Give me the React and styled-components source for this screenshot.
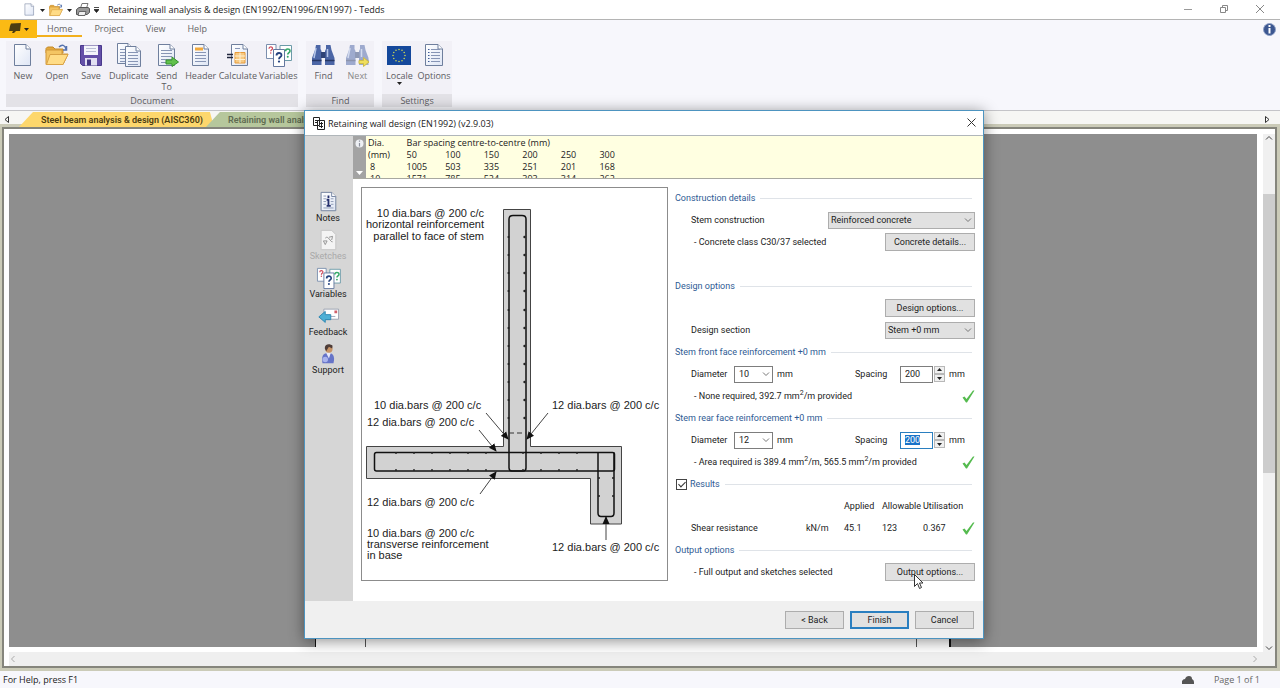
import React, { useEffect, useRef } from 'react'
import styled, { createGlobalStyle } from 'styled-components'

/* ---------- data ---------- */

const menuTabs = ['Home', 'Project', 'View', 'Help']

const spacings = ['50', '100', '150', '200', '250', '300']
const barAreas = [
  { dia: '8', areas: ['1005', '503', '335', '251', '201', '168'] },
  { dia: '10', areas: ['1571', '785', '524', '393', '314', '262'] },
]

/* ---------- icons ---------- */

const PageShape = ({ x = 3, y = 1, w = 17, h = 22, children }) => (
  <g transform={`translate(${x} ${y})`}>
    <path d={`M0.5 0.5H${w - 5}L${w - 0.5} 5V${h - 0.5}H0.5Z`} fill="url(#paper)" stroke="#6f7f9d" />
    <path d={`M${w - 5} 0.5V5H${w - 0.5}`} fill="#fff" stroke="#6f7f9d" />
    {children}
  </g>
)

const Lines = ({ x = 3, y = 6, w = 11, n = 5, color = '#8795b5' }) =>
  Array.from({ length: n }, (_, i) => (
    <path key={i} d={`M${x} ${y + i * 3 + 0.5}h${w}`} stroke={color} />
  ))

const NewIcon = () => <PageShape />

const OpenIcon = () => (
  <g>
    <path d="M1 5.500L2.500 4H8L10 6H18V10H1Z" fill="#e3a83c" stroke="#c48a2a" />
    <path d="M1 21.500V7H17V11H23L18 21.500Z" fill="#f4c563" stroke="#d0983a" />
    <path d="M5 11.500H23L18 21.500H1.500Z" fill="#ffdc86" stroke="#d9a245" />
    <path d="M14 4C17 1 20 2 21 6M21.500 3V7H18" fill="none" stroke="#5572ad" strokeWidth="1.500" />
  </g>
)

const SaveIcon = () => (
  <g>
    <path d="M1.500 2.500H22.500V22.500H3.500L1.500 20.500Z" fill="#6450a8" stroke="#49398c" />
    <path d="M5 2.500H19V12H5Z" fill="#f4f5fb" />
    <path d="M7 5.500H17M7 8.500H17" stroke="#b9bfd4" />
    <path d="M6 15H18V22.500H6Z" fill="#e2e0f2" />
    <path d="M8 16.500H12V22.500H8Z" fill="#443684" />
  </g>
)

const DuplicateIcon = () => (
  <g>
    <PageShape x={0} y={0} w={16} h={21}><Lines w={9} /></PageShape>
    <PageShape x={8} y={3} w={16} h={21}><Lines w={10} /></PageShape>
  </g>
)

const SendIcon = () => (
  <g>
    <PageShape><Lines n={5} /></PageShape>
    <path d="M11 17H17V14L23.500 19L17 23.500V21H11Z" fill="#62c24c" stroke="#36912f" />
  </g>
)

const HeaderIcon = () => (
  <PageShape>
    <path d="M3 3.500H11V6.500H3Z" fill="#f2a93c" />
    <Lines y={8} n={4} />
  </PageShape>
)

const CalculateIcon = () => (
  <g>
    <PageShape x={5}>
      <path d="M4 4.500H9" stroke="#8795b5" />
      <path d="M4 8.500H14V19H4Z" fill="#f7ca83" stroke="#e79b3b" />
      <path d="M4 12H14M4 15.500H14M9 8.500V19" stroke="#fff0d2" />
    </PageShape>
    <path d="M1 11.500H7M1 14.500H7" stroke="#20263c" strokeWidth="1.500" />
  </g>
)

const Question = ({ x, y, size = 1, color }) => (
  <g transform={`translate(${x} ${y}) scale(${size})`}>
    <path d="M0 2.500C0 -0.800 5 -0.800 5 2.200C5 4.200 2.500 4 2.500 6.200" fill="none" stroke={color} strokeWidth="1.800" />
    <circle cx="2.500" cy="8.600" r="1.100" fill={color} />
  </g>
)

const VariablesIcon = () => (
  <g>
    <path d="M0.500 1.500H10V15.500H0.500Z" fill="#fff" stroke="#7b8fae" />
    <path d="M14 2.500H25.500V17.500H14Z" fill="#fff" stroke="#6c9ba8" />
    <path d="M7.500 6.500H18.500V23.500H7.500Z" fill="#fff" stroke="#64789f" />
    <Question x={3} y={4} size={0.7} color="#d04a5a" />
    <Question x={19.500} y={6} size={0.9} color="#35a968" />
    <Question x={10.500} y={10} color="#26437f" />
  </g>
)

const FindIcon = () => (
  <g>
    <path d="M5 2H9.500V6L10.500 8V22H1V15L4 7Z" fill="#4c66a6" />
    <path d="M15 2H19.500L20.500 7L23.500 15V22H14V8L15 6Z" fill="#4c66a6" />
    <path d="M10 9H14.500V15H10Z" fill="#2f4377" />
    <path d="M5 5L3 15M16.500 6V14" stroke="#b6c6e8" strokeWidth="1.500" />
    <path d="M1 17.500H10.500M14 17.500H23.500" stroke="#263763" strokeWidth="1.500" />
  </g>
)

const NextIcon = () => (
  <g>
    <g opacity="0.5"><FindIcon /></g>
    <path d="M14 17.500H18.500V14.500L24 19L18.500 23.500V20.500H14Z" fill="#f0df5d" stroke="#cdbb4a" />
  </g>
)

const LocaleIcon = () => (
  <g>
    <path d="M0 3H24V22H0Z" fill="#14489b" />
    {Array.from({ length: 12 }, (_, i) => {
      const a = (i * Math.PI) / 6
      return <circle key={i} cx={12 + 6 * Math.cos(a)} cy={12.5 + 6 * Math.sin(a)} r="0.800" fill="#c9d255" />
    })}
  </g>
)

const OptionsIcon = () => (
  <PageShape x={3} w={18}>
    <Lines x={6} y={5} w={9} />
    <path d="M3 5.500H4.500M3 8.500H4.500M3 11.500H4.500M3 14.500H4.500M3 17.500H4.500" stroke="#3f5b97" />
  </PageShape>
)

const NotesIcon = () => (
  <PageShape x={4} y={1} w={17} h={21}>
    <path d="M3 4.500H6M3 7.500H6M11 7.500H14M3 10.500H6M11 10.500H14M3 13.500H6M11 13.500H14M3 17.500H14" stroke="#8a97b4" />
    <path d="M8.500 4V6.500M6.500 8.500H8.500V15M6.500 15.200H11" fill="none" stroke="#25306e" strokeWidth="2" />
  </PageShape>
)

const SketchesIcon = () => (
  <g>
    <path d="M4.500 1.500H16L20.500 6V22.500H4.500Z" fill="#f4f4f4" stroke="#c4c4c4" />
    <path d="M7 13H11L9 17ZM13 9L17 8L16 12M9 10C12 6 15 15 17 14" fill="none" stroke="#8f8f8f" />
  </g>
)

const FeedbackIcon = () => (
  <g>
    <path d="M7.500 4.500H23.500V15.500H7.500Z" fill="#fff" stroke="#99a1b0" />
    <path d="M19 6H22V9H19Z" fill="#d0606a" />
    <path d="M15 12.500H20" stroke="#98a3b8" />
    <path d="M2 13L9 7V10.500H15V16H9V19Z" fill="#4eb0d5" stroke="#2b84b0" />
  </g>
)

const SupportIcon = () => (
  <g>
    <path d="M6 22C4 12 9 11 12.500 11C17 11 20 14 18 22Z" fill="#6674c8" />
    <path d="M10 11L13 17L15 11Z" fill="#e8e9f8" />
    <circle cx="13" cy="6.500" r="4" fill="#c99467" />
    <path d="M8.500 6C8 1 14 0 17 3L16.500 6L13 4L10 9Z" fill="#4e3d38" />
    <circle cx="9" cy="18" r="3" fill="#a9b3ee" />
  </g>
)

const Icon = ({ size = 24, children }) => (
  <svg width={size} height={size} viewBox="0 0 24 24" overflow="visible" aria-hidden="true">{children}</svg>
)

const Chevron = ({ rotate = 0, color = '#777', size = 8 }) => (
  <svg width={size} height={size} viewBox="0 0 8 8" aria-hidden="true">
    <path d="M1 2.500L4 5.500L7 2.500" fill="none" stroke={color} transform={`rotate(${rotate} 4 4)`} />
  </svg>
)

const Caret = ({ rotate = 0 }) => (
  <svg width="5" height="4" viewBox="0 0 5 4" aria-hidden="true">
    <path d="M0 1H5L2.500 4Z" fill="#222" transform={`rotate(${rotate} 2.500 2)`} />
  </svg>
)

const Tick = () => (
  <svg width="13" height="13" viewBox="0 0 13 13" role="img" aria-label="Pass">
    <path d="M0.500 7.500L2.500 6.500L4.500 9L11 0.500L12.500 0.500L5 12.500H4Z" fill="#55bb4f" />
  </svg>
)

/* ---------- reinforcement sketch ---------- */

const stemDots = [237, 255, 273, 291, 310, 328, 346, 364, 382, 400, 418]
const baseDots = [396, 414, 432, 450, 468, 486, 523, 541, 559, 577]

const WallSketch = () => (
  <Sketch viewBox="362 188 305 392" role="img" aria-label="Retaining wall reinforcement">
    <defs>
      <marker id="head" viewBox="0 0 8 8" refX="7" refY="4" markerWidth="8" markerHeight="8" markerUnits="userSpaceOnUse" orient="auto">
        <path d="M0 0.500L8 4L0 7.500Z" fill="#111" />
      </marker>
    </defs>
    <path
      d="M503.500 209.500H530.500V446.500H621.500V524H590.500V478.500H366.500V446.500H503.500Z"
      fill="#d2d2d2"
      stroke="#444"
    />
    <g fill="none" stroke="#111" strokeWidth="1.500">
      <path d="M509 468V219Q509 215.500 513 215.500H522Q526 215.500 526 219V468Q526 471 523 471H512Q509 471 509 468" />
      <rect x="374.500" y="452.500" width="240" height="18.500" rx="2" />
      <path d="M598 452.500V513Q598 516.500 601 516.500H611Q614 516.500 614 513V452.500" />
    </g>
    <path d="M509 433H526" stroke="#333" strokeDasharray="5 3" />
    <g fill="#222">
      {stemDots.map((y) => (
        <React.Fragment key={y}>
          <circle cx="508.500" cy={y} r="1.100" />
          <circle cx="524.500" cy={y} r="1.200" />
        </React.Fragment>
      ))}
      {baseDots.map((x) => (
        <React.Fragment key={x}>
          <circle cx={x} cy="453" r="0.900" />
          <circle cx={x} cy="470" r="0.900" />
        </React.Fragment>
      ))}
      {[478, 496].map((y) => (
        <React.Fragment key={y}>
          <circle cx="599" cy={y} r="1" />
          <circle cx="613" cy={y} r="1" />
        </React.Fragment>
      ))}
    </g>
    <g stroke="#444">
      <path d="M486 413L508 439" markerEnd="url(#head)" />
      <path d="M479 430L496 451" markerEnd="url(#head)" />
      <path d="M480 494L496 472" markerEnd="url(#head)" />
      <path d="M548 413L527 439" markerEnd="url(#head)" />
      <path d="M606 540V517" markerEnd="url(#head)" />
    </g>
    <SketchText textAnchor="end">
      <tspan x="484" y="217">10 dia.bars @ 200 c/c</tspan>
      <tspan x="484" y="228">horizontal reinforcement</tspan>
      <tspan x="484" y="240">parallel to face of stem</tspan>
    </SketchText>
    <SketchText x="374" y="409">10 dia.bars @ 200 c/c</SketchText>
    <SketchText x="367" y="426">12 dia.bars @ 200 c/c</SketchText>
    <SketchText x="552" y="409">12 dia.bars @ 200 c/c</SketchText>
    <SketchText x="367" y="506">12 dia.bars @ 200 c/c</SketchText>
    <SketchText>
      <tspan x="367" y="537">10 dia.bars @ 200 c/c</tspan>
      <tspan x="367" y="548">transverse reinforcement</tspan>
      <tspan x="367" y="559">in base</tspan>
    </SketchText>
    <SketchText x="552" y="551">12 dia.bars @ 200 c/c</SketchText>
  </Sketch>
)

/* ---------- dialog parts ---------- */

const ComboBox = ({ id, value, width, light }) => (
  <Combo $width={width} $light={light}>
    <select id={id} defaultValue={value}>
      <option>{value}</option>
    </select>
    <Chevron />
  </Combo>
)

const SpinBox = ({ id, value, selected }) => {
  const input = useRef(null)

  useEffect(() => {
    if (selected) {
      input.current.focus()
      input.current.select()
    }
  }, [selected])

  return (
    <Spin>
      <SpinInput id={id} ref={input} defaultValue={value} $active={selected} />
      <SpinArrows>
        <button type="button" aria-label="Increase"><Caret rotate={180} /></button>
        <button type="button" aria-label="Decrease"><Caret /></button>
      </SpinArrows>
    </Spin>
  )
}

const BarRow = ({ name, diameter, spacing, selected }) => (
  <FieldRow>
    <DiameterLabel htmlFor={`${name}-dia`}>Diameter</DiameterLabel>
    <ComboBox id={`${name}-dia`} value={diameter} width="39px" light />
    <Unit>mm</Unit>
    <SpacingLabel htmlFor={`${name}-spacing`}>Spacing</SpacingLabel>
    <SpinBox id={`${name}-spacing`} value={spacing} selected={selected} />
    <Unit>mm</Unit>
  </FieldRow>
)

const Dialog = () => (
  <DialogWindow role="dialog" aria-label="Retaining wall design">
    <DialogTitle>
      <svg width="13" height="13" viewBox="0 0 13 13" aria-hidden="true">
        <path d="M1.500 0.500H7.500V8.500H1.500ZM5.500 3.500H12.500V12.500H5.500ZM3 3.500H6M3 5.500H6M7 6.500H11M7 9.500H11M9.500 5V11" fill="none" stroke="#222" />
      </svg>
      <h2>Retaining wall design (EN1992) (v2.9.03)</h2>
      <button type="button" aria-label="Close">
        <svg width="9" height="9" viewBox="0 0 9 9"><path d="M0.500 0.500L8.500 8.500M8.500 0.500L0.500 8.500" stroke="#333" /></svg>
      </button>
    </DialogTitle>

    <DialogBody>
      <SideBar>
        <SideButton type="button"><Icon size={22}><NotesIcon /></Icon>Notes</SideButton>
        <SideButton type="button" disabled><Icon size={22}><SketchesIcon /></Icon>Sketches</SideButton>
        <SideButton type="button"><Icon size={22}><VariablesIcon /></Icon>Variables</SideButton>
        <SideButton type="button"><Icon size={22}><FeedbackIcon /></Icon>Feedback</SideButton>
        <SideButton type="button"><Icon size={22}><SupportIcon /></Icon>Support</SideButton>
      </SideBar>

      <DialogMain>
        <InfoPanel>
          <InfoStrip>
            <svg width="9" height="9" viewBox="0 0 9 9" aria-hidden="true">
              <circle cx="4.500" cy="4.500" r="4" fill="#eef0f4" />
              <path d="M4.500 1.500V2.800M4.500 4V7.500" stroke="#8b8f9c" strokeWidth="1.200" />
            </svg>
            <svg width="7" height="4" viewBox="0 0 7 4" aria-hidden="true"><path d="M0 0H7L3.500 4Z" fill="#fff" /></svg>
          </InfoStrip>
          <InfoTable>
            <thead>
              <tr><th>Dia.</th><th colSpan="6">Bar spacing centre-to-centre (mm)</th></tr>
              <tr><th>(mm)</th>{spacings.map((s) => <th key={s}>{s}</th>)}</tr>
            </thead>
            <tbody>
              {barAreas.map((row) => (
                <tr key={row.dia}>
                  <td>{row.dia}</td>
                  {row.areas.map((a) => <td key={a}>{a}</td>)}
                </tr>
              ))}
            </tbody>
          </InfoTable>
        </InfoPanel>

        <Columns>
          <WallSketch />
          <Form>
            <SectionTitle>Construction details</SectionTitle>
            <FieldRow>
              <label htmlFor="stem">Stem construction</label>
              <ComboBox id="stem" value="Reinforced concrete" width="147px" />
            </FieldRow>
            <FieldRow $spaced>
              <Note>- Concrete class C30/37 selected</Note>
              <PushButton type="button">Concrete details...</PushButton>
            </FieldRow>

            <SectionTitle>Design options</SectionTitle>
            <FieldRow $end>
              <PushButton type="button">Design options...</PushButton>
            </FieldRow>
            <FieldRow>
              <label htmlFor="section">Design section</label>
              <ComboBox id="section" value="Stem +0 mm" width="90px" />
            </FieldRow>

            <SectionTitle>Stem front face reinforcement +0 mm</SectionTitle>
            <BarRow name="front" diameter="10" spacing="200" />
            <FieldRow>
              <Note>- None required, 392.7 mm<sup>2</sup>/m provided</Note>
              <Tick />
            </FieldRow>

            <SectionTitle>Stem rear face reinforcement +0 mm</SectionTitle>
            <BarRow name="rear" diameter="12" spacing="200" selected />
            <FieldRow>
              <Note>- Area required is 389.4 mm<sup>2</sup>/m, 565.5 mm<sup>2</sup>/m provided</Note>
              <Tick />
            </FieldRow>

            <SectionTitle>
              <CheckBox type="checkbox" id="results" defaultChecked />
              <label htmlFor="results">Results</label>
            </SectionTitle>
            <ResultTable>
              <colgroup>
                <Col $width="115px" />
                <Col $width="38px" />
                <Col $width="38px" />
                <Col $width="41px" />
                <Col $width="39px" />
                <Col $width="13px" />
              </colgroup>
              <thead>
                <tr><th></th><th></th><th>Applied</th><th>Allowable</th><th>Utilisation</th><th></th></tr>
              </thead>
              <tbody>
                <tr><td>Shear resistance</td><td>kN/m</td><td>45.1</td><td>123</td><td>0.367</td><td><Tick /></td></tr>
              </tbody>
            </ResultTable>

            <SectionTitle>Output options</SectionTitle>
            <FieldRow>
              <Note>- Full output and sketches selected</Note>
              <PushButton type="button">
                Output options...
                <Pointer width="10" height="16" viewBox="0 0 10 16" aria-hidden="true">
                  <path d="M0.500 0.500V12.500L3.500 9.500L5.500 14.500L7.500 13.500L5.500 9H9Z" fill="#fff" stroke="#333" />
                </Pointer>
              </PushButton>
            </FieldRow>
          </Form>
        </Columns>
      </DialogMain>
    </DialogBody>

    <DialogFooter>
      <PushButton type="button" $small>&lt; Back</PushButton>
      <PushButton type="button" $small $primary>Finish</PushButton>
      <PushButton type="button" $small>Cancel</PushButton>
    </DialogFooter>
  </DialogWindow>
)

/* ---------- application ---------- */

const Ribbon = () => (
  <RibbonBar>
    <RibbonGroup>
      <RibbonItems>
        <RibbonButton type="button"><Icon><NewIcon /></Icon>New</RibbonButton>
        <RibbonButton type="button"><Icon><OpenIcon /></Icon>Open</RibbonButton>
        <RibbonButton type="button"><Icon><SaveIcon /></Icon>Save</RibbonButton>
        <RibbonButton type="button"><Icon><DuplicateIcon /></Icon>Duplicate</RibbonButton>
        <RibbonButton type="button"><Icon><SendIcon /></Icon>Send<br />To</RibbonButton>
        <RibbonButton type="button"><Icon><HeaderIcon /></Icon>Header</RibbonButton>
        <RibbonButton type="button"><Icon><CalculateIcon /></Icon>Calculate</RibbonButton>
        <RibbonButton type="button"><Icon><VariablesIcon /></Icon>Variables</RibbonButton>
      </RibbonItems>
      <GroupName>Document</GroupName>
    </RibbonGroup>
    <RibbonGroup>
      <RibbonItems>
        <RibbonButton type="button"><Icon><FindIcon /></Icon>Find</RibbonButton>
        <RibbonButton type="button" disabled><Icon><NextIcon /></Icon>Next</RibbonButton>
      </RibbonItems>
      <GroupName>Find</GroupName>
    </RibbonGroup>
    <RibbonGroup>
      <RibbonItems>
        <RibbonButton type="button"><Icon><LocaleIcon /></Icon>Locale<Caret /></RibbonButton>
        <RibbonButton type="button"><Icon><OptionsIcon /></Icon>Options</RibbonButton>
      </RibbonItems>
      <GroupName>Settings</GroupName>
    </RibbonGroup>
  </RibbonBar>
)

const App = () => {
  return (
    <>
      <GlobalStyle />
      <Shell>
        <SharedDefs aria-hidden="true">
          <defs>
            <linearGradient id="paper" x1="0" y1="0" x2="1" y2="1">
              <stop offset="0" stopColor="#fff" />
              <stop offset="1" stopColor="#dfe6f5" />
            </linearGradient>
          </defs>
        </SharedDefs>

        <TitleBar>
          <QuickAccess>
            <button type="button" aria-label="New"><Icon size={13}><PageShape /></Icon></button>
            <button type="button" aria-label="New options"><Caret /></button>
            <button type="button" aria-label="Open"><Icon size={14}><OpenIcon /></Icon></button>
            <button type="button" aria-label="Open options"><Caret /></button>
            <button type="button" aria-label="Print">
              <svg width="14" height="13" viewBox="0 0 14 13">
                <path d="M4.500 5L6 0.500H12L10.500 5" fill="#fff" stroke="#777" />
                <path d="M0.500 6.500L3 4.500H12L13.500 5.500V9.500L11 11.500H0.500Z" fill="#999" stroke="#555" />
                <path d="M3 8.500H10L9 12.500H2Z" fill="#eee" stroke="#666" />
              </svg>
            </button>
            <button type="button" aria-label="Customise">
              <svg width="5" height="6" viewBox="0 0 5 6"><path d="M0 0.500H5M0 2.500H5L2.500 5.500Z" fill="#222" stroke="#222" strokeWidth="0.800" /></svg>
            </button>
          </QuickAccess>
          <h1>Retaining wall analysis &amp; design (EN1992/EN1996/EN1997) - Tedds</h1>
          <WindowButton type="button" aria-label="Minimise">
            <svg width="8" height="8" viewBox="0 0 8 8"><path d="M0 4.500H8" stroke="#999" /></svg>
          </WindowButton>
          <WindowButton type="button" aria-label="Restore">
            <svg width="8" height="8" viewBox="0 0 8 8"><path d="M0.500 2.500H5.500V7.500H0.500ZM2.500 2V0.500H7.500V5.500H6" fill="none" stroke="#888" /></svg>
          </WindowButton>
          <WindowButton type="button" aria-label="Close">
            <svg width="8" height="8" viewBox="0 0 8 8"><path d="M0 0L8 8M8 0L0 8" stroke="#888" /></svg>
          </WindowButton>
        </TitleBar>

        <MenuBar>
          <AppButton type="button" aria-label="Application menu">
            <svg width="12" height="12" viewBox="0 0 12 12">
              <path d="M2 0.500L12 0L11 8H7L5 10H3L4 8H0L1 3Z" fill="#4b3d12" />
            </svg>
            <Caret />
          </AppButton>
          {menuTabs.map((tab) => (
            <MenuTab key={tab} type="button" $active={tab === 'Home'}>{tab}</MenuTab>
          ))}
          <AboutButton type="button" aria-label="About">
            <svg width="13" height="13" viewBox="0 0 13 13">
              <circle cx="6.500" cy="6.500" r="6" fill="#3c5791" stroke="#90a1c6" />
              <path d="M6.500 2V4M6.500 5V10.500" stroke="#fff" strokeWidth="2" />
            </svg>
          </AboutButton>
        </MenuBar>

        <Ribbon />

        <TabStrip>
          <StripArrow type="button" aria-label="Previous tab">
            <svg width="5" height="7" viewBox="0 0 5 7"><path d="M4.500 0.500V6.500L1 3.500Z" fill="none" stroke="#333" /></svg>
          </StripArrow>
          <DocTab type="button" $active>Steel beam analysis &amp; design (AISC360)</DocTab>
          <DocTab type="button">Retaining wall analysis &amp; design</DocTab>
          <StripFill />
          <StripArrow type="button" aria-label="Next tab">
            <svg width="5" height="7" viewBox="0 0 5 7"><path d="M0.500 0.500V6.500L4 3.500Z" fill="none" stroke="#333" /></svg>
          </StripArrow>
        </TabStrip>

        <DocFrame>
          <DocRow>
            <Viewport><Page><PageMargin /></Page></Viewport>
            <VScroll>
              <Chevron rotate={180} color="#444" />
              <VTrack><VThumb /></VTrack>
              <Chevron color="#444" />
            </VScroll>
          </DocRow>
          <HScroll>
            <Chevron rotate={90} color="#aaa" />
            <Chevron rotate={-90} color="#aaa" />
          </HScroll>
        </DocFrame>

        <StatusBar>
          <span>For Help, press F1</span>
          <StatusRight>
            <svg width="12" height="8" viewBox="0 0 12 8" aria-hidden="true">
              <path d="M0 8V5Q1 3 3 3Q4 0 7 0Q10 0 10 3Q12 4 12 6V8Z" fill="#555" />
            </svg>
            Page 1 of 1
          </StatusRight>
        </StatusBar>
      </Shell>
      <Dialog />
    </>
  )
}

export default App

/* ---------- styles ---------- */

const GlobalStyle = createGlobalStyle`
* {
  box-sizing: border-box;
}

body {
  margin: 0;
  font-family: "Open Sans", "Noto Sans", sans-serif;
  font-size: 9px;
  color: #222;
  overflow: hidden;
}

button, input, select {
  font: inherit;
  color: inherit;
  margin: 0;
  padding: 0;
}

button {
  border: 0;
  background: none;
}

svg {
  flex: none;
}
`

const Shell = styled.div`
display: flex;
flex-direction: column;
height: 100vh;
background-color: #f7f7fc;
`

const SharedDefs = styled.svg`
display: block;
width: 0;
height: 0;
`

const TitleBar = styled.header`
display: flex;
align-items: center;
height: 20px;
padding: 0 2px 0 23px;
background-color: white;
border-bottom: 1px solid #b4b4b4;

h1 {
  flex: 1;
  margin: 0;
  font-size: 9px;
  font-weight: normal;
}
`

const QuickAccess = styled.div`
display: flex;
align-items: center;
gap: 4px;
margin-right: 9px;

button {
  display: flex;
}
`

const WindowButton = styled.button`
width: 36px;
`

const MenuBar = styled.nav`
display: flex;
height: 18px;
`

const AppButton = styled.button`
display: flex;
align-items: center;
justify-content: center;
gap: 3px;
width: 37px;
background-color: #fbba14;
`

const MenuTab = styled.button`
margin: 2px 2px 1px 0;
padding: 0 10px;
color: #666;
border-bottom: 2px solid ${(props) => (props.$active ? '#f2b01e' : 'transparent')};
`

const AboutButton = styled.button`
display: flex;
align-items: center;
margin-left: auto;
padding-right: 4px;
`

const RibbonBar = styled.div`
display: flex;
align-items: flex-start;
gap: 8px;
height: 73px;
padding: 3px 6px 0;
border-bottom: 1px solid #c4c4c8;
`

const RibbonGroup = styled.section`
background-color: #f2f1f7;
`

const RibbonItems = styled.div`
display: flex;
height: 53px;
padding-top: 2px;
`

const RibbonButton = styled.button`
display: flex;
flex-direction: column;
align-items: center;
min-width: 34px;
padding: 0 1px;
color: ${(props) => (props.disabled ? '#888' : '#5c5c62')};
line-height: 11px;

> svg:first-child {
  margin-bottom: 3px;
}
`

const GroupName = styled.div`
height: 13px;
line-height: 13px;
text-align: center;
color: #5c5c62;
background-color: #e3e2e7;
`

const TabStrip = styled.div`
display: flex;
height: 16px;
background-color: #f6f6f4;
`

const StripArrow = styled.button`
display: flex;
align-items: center;
padding: 0 10px 0 4px;
`

const DocTab = styled.button`
padding: 0 11px 0 22px;
margin: 1px 0 0 -8px;
font-family: Roboto, sans-serif;
font-weight: 600;
color: ${(props) => (props.$active ? '#4b3c12' : '#5f6b52')};
background-color: ${(props) => (props.$active ? '#fdd76c' : '#b6c79c')};
clip-path: polygon(0 100%, 14px 0, calc(100% - 4px) 0, 100% 100%);

&:nth-of-type(2) {
  margin-left: 0;
}
`

const StripFill = styled.div`
flex: 1;
`

const DocFrame = styled.main`
display: flex;
flex-direction: column;
flex: 1;
min-height: 0;
padding: 5px 0 0 5px;
margin: 0 3px 3px 2px;
background-color: white;
border: 2px solid #85857c;
outline: 3px solid #cbcbb8;
`

const DocRow = styled.div`
display: flex;
flex: 1;
min-height: 0;
`

const Viewport = styled.div`
display: flex;
flex: 1;
justify-content: center;
margin-bottom: 5px;
background-color: #8e8e8e;
overflow: hidden;
`

const Page = styled.div`
display: flex;
width: 636px;
padding: 0 32px 0 49px;
background-color: white;
border: solid #111;
border-width: 0 2px 0 1px;
`

const PageMargin = styled.div`
flex: 1;
border: solid #555;
border-width: 0 1px;
`

const VScroll = styled.div`
display: flex;
flex-direction: column;
align-items: center;
width: 12px;
margin-left: 6px;
background-color: #f0f0f0;
`

const VTrack = styled.div`
flex: 1;
width: 100%;
padding: 52px 0;
`

const VThumb = styled.div`
height: 70%;
background-color: #cdcdcd;
`

const HScroll = styled.div`
display: flex;
align-items: center;
justify-content: space-between;
height: 14px;
padding-right: 16px;
background-color: #efefef;
`

const StatusBar = styled.footer`
display: flex;
align-items: center;
justify-content: space-between;
height: 17px;
padding: 0 20px 0 3px;
`

const StatusRight = styled.div`
display: flex;
align-items: center;
gap: 20px;
color: #666;
`

const DialogWindow = styled.div`
position: absolute;
top: 110px;
left: 304px;
width: 680px;
background-color: white;
border: 1px solid #4d94c0;
box-shadow: 0 2px 14px rgba(0, 0, 0, 0.45);
`

const DialogTitle = styled.div`
display: flex;
align-items: center;
gap: 3px;
height: 25px;
padding: 0 7px;
border-bottom: 1px solid #b0b6ba;

h2 {
  flex: 1;
  margin: 0;
  font-size: 9px;
  font-weight: normal;
}
`

const DialogBody = styled.div`
display: flex;
font-family: Roboto, sans-serif;
`

const SideBar = styled.nav`
display: flex;
flex-direction: column;
width: 48px;
padding: 55px 2px 0 0;
background-color: #d6d6d6;
`

const SideButton = styled.button`
display: flex;
flex-direction: column;
align-items: center;
height: 38px;
line-height: 10px;
color: ${(props) => (props.disabled ? '#a9a9a9' : '#222')};
`

const DialogMain = styled.div`
flex: 1;
min-width: 0;
`

const InfoPanel = styled.div`
display: flex;
height: 43px;
overflow: hidden;
background-color: #ffffe1;
border-bottom: 1px solid #a8a8a0;
font-family: "Open Sans", "Noto Sans", sans-serif;
`

const InfoStrip = styled.div`
display: flex;
flex-direction: column;
align-items: center;
justify-content: space-between;
width: 13px;
padding: 3px 0;
background-color: #a3a3a3;
`

const InfoTable = styled.table`
table-layout: fixed;
width: 270px;
height: 48px;
margin: 1px 0 0 2px;
border-collapse: collapse;

th, td {
  padding: 0;
  font-weight: normal;
  text-align: left;
  line-height: 12px;
}

td:first-child {
  padding-left: 2px;
}
`

const Columns = styled.div`
display: flex;
align-items: flex-start;
gap: 7px;
padding: 8px 9px 18px 8px;
`

const Sketch = styled.svg`
width: 307px;
height: 394px;
border: 1px solid #8c8c8c;
`

const SketchText = styled.text`
font-family: "Liberation Sans", Arial, sans-serif;
font-size: 11px;
fill: #222;
`

const Form = styled.form`
flex: 1;
`

const SectionTitle = styled.h3`
display: flex;
align-items: center;
height: 22px;
margin: 0;
font-size: 9px;
font-weight: normal;
color: #2f5b94;

&::after {
  content: "";
  flex: 1;
  height: 1px;
  margin: 0 3px 0 5px;
  background-color: #dfe3e8;
}
`

const FieldRow = styled.div`
display: flex;
align-items: center;
justify-content: ${(props) => (props.$end ? 'flex-end' : 'space-between')};
height: 22px;
margin-bottom: ${(props) => (props.$spaced ? '22px' : '0')};
padding-left: 16px;

sup {
  font-size: 7px;
  line-height: 0;
}
`

const Note = styled.span`
padding-left: 3px;
`

const DiameterLabel = styled.label`
width: 43px;
`

const SpacingLabel = styled.label`
width: 45px;
margin-left: auto;
`

const Unit = styled.span`
width: 26px;
margin-left: 4px;
`

const PushButton = styled.button`
position: relative;
width: ${(props) => (props.$small ? '59px' : '90px')};
height: 18px;
background-color: #e1e1e1;
border: ${(props) => (props.$primary ? '2px solid #2a7fc0' : '1px solid #adadad')};
`

const Combo = styled.div`
display: grid;
align-items: center;
width: ${(props) => props.$width};
height: 17px;
background-color: ${(props) => (props.$light ? 'white' : '#e1e1e1')};
border: 1px solid ${(props) => (props.$light ? '#7d7d7d' : '#adadad')};

select {
  grid-area: 1 / 1;
  width: 100%;
  height: 100%;
  padding-left: ${(props) => (props.$light ? '4px' : '2px')};
  appearance: none;
  background: none;
  border: 0;
}

svg {
  grid-area: 1 / 1;
  justify-self: end;
  margin-right: 2px;
  pointer-events: none;
}
`

const Spin = styled.div`
display: flex;
align-items: center;
gap: 1px;
`

const SpinInput = styled.input`
width: 33px;
height: 17px;
padding-left: 4px;
background-color: white;
border: 1px solid ${(props) => (props.$active ? '#2a7fc0' : '#7d7d7d')};
outline: 0;

&::selection {
  color: white;
  background-color: #1a73c8;
}
`

const SpinArrows = styled.div`
display: flex;
flex-direction: column;

button {
  display: flex;
  align-items: center;
  justify-content: center;
  width: 11px;
  height: 8px;
  background-color: #f0f0f0;
  border: 1px solid #b8b8b8;
}
`

const CheckBox = styled.input`
width: 11px;
height: 11px;
margin: 0 3px 0 1px;
appearance: none;
background-color: white;
border: 1px solid #444;

&:checked::before {
  content: "";
  display: block;
  width: 3px;
  height: 6px;
  margin-left: 3px;
  border: solid #333;
  border-width: 0 1px 1px 0;
  transform: rotate(45deg);
}
`

const Col = styled.col`
width: ${(props) => props.$width};
`

const ResultTable = styled.table`
table-layout: fixed;
width: 284px;
margin-left: 16px;
border-collapse: collapse;

tr {
  height: 22px;
}

th, td {
  padding: 0;
  font-weight: normal;
  text-align: left;
  white-space: nowrap;
}

svg {
  display: block;
}
`

const Pointer = styled.svg`
position: absolute;
top: 10px;
left: 28px;
`

const DialogFooter = styled.div`
display: flex;
align-items: center;
justify-content: flex-end;
gap: 6px;
height: 37px;
padding-right: 9px;
background-color: #f0f0f0;
font-family: Roboto, sans-serif;
`
